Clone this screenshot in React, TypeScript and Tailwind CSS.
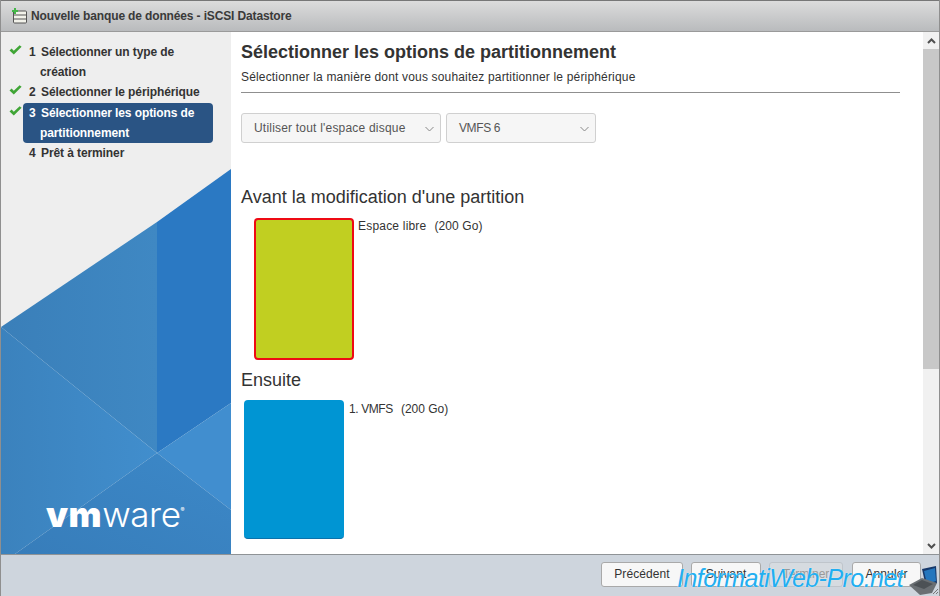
import React from "react";

function Check() {
  return (
    <svg width="13" height="10" viewBox="0 0 13 10" className="shrink-0">
      <path d="M0.5 5.5 L2.6 3.6 L4.8 5.8 L10.6 0.3 L12.6 1.8 L4.8 9.6 Z" fill="#3fa535" />
    </svg>
  );
}

function Step({ n, lines, done, active }: { n: string; lines: string[]; done?: boolean; active?: boolean }) {
  return (
    <div className="flex">
      <div className="w-[22px] pl-[8px] pt-[3px] shrink-0 h-[20px]">{done ? <Check /> : null}</div>
      <div
        className={
          active
            ? "w-[190px] rounded-[4px] bg-[#2a5484] text-white px-[6px] leading-[20px] tracking-[-0.1px]"
            : "w-[190px] text-[#333333] px-[6px] leading-[20px] tracking-[-0.1px]"
        }
      >
        {lines.map((l, i) => (
          <div key={i} className={i === 0 ? "flex" : "pl-[11px]"}>
            {i === 0 ? <span className="w-[12px] shrink-0">{n}</span> : null}
            <span>{l}</span>
          </div>
        ))}
      </div>
    </div>
  );
}

function Select({ label, w, track }: { label: string; w: string; track: string }) {
  return (
    <div className={`${w} h-[30px] rounded-[3px] border border-[#d0d0d0] bg-[#f6f6f6] flex items-center justify-between pl-[12px] pr-[5px] text-[12px] text-[#555555]`}>
      <span className={track}>{label}</span>
      <svg width="9" height="6" viewBox="0 0 9 6" className="mr-[1px] mt-[2px]">
        <path d="M0.5 1 L4.5 5 L8.5 1" fill="none" stroke="#888888" strokeWidth="1" />
      </svg>
    </div>
  );
}

function Footer({ label, disabled, w }: { label: string; disabled?: boolean; w: string }) {
  return (
    <div
      className={
        disabled
          ? `${w} h-[25px] pb-[1px] rounded-[3px] border border-[#bfc5cb] bg-[#d6dbe0] flex items-center justify-center text-[12px] text-[#9a9a9a]`
          : `${w} h-[25px] pb-[1px] rounded-[3px] border border-[#a9a9a9] bg-[#f7f7f7] flex items-center justify-center text-[12px] text-[#333333] tracking-[0.1px]`
      }
    >
      {label}
    </div>
  );
}

export default function App() {
  return (
    <div className="relative w-[940px] h-[596px] overflow-hidden flex flex-col border-l border-r border-[#8f8f8f] bg-white font-['Liberation_Sans',Arial,sans-serif]">
      <header className="h-[32px] shrink-0 flex items-center pl-[10px] gap-[3px] border-t border-b border-t-[#777777] border-b-[#9a9a9a] bg-gradient-to-b from-[#dcdcdc] to-[#b9bbbd]">
        <svg width="17" height="16" viewBox="0 0 17 16">
          <rect x="2.5" y="3" width="13" height="12" rx="1" fill="#f2f2ea" stroke="#555" />
          <path d="M2.5 7 H15.5 M2.5 11 H15.5" stroke="#555" />
          <path d="M3 0 h2 v2 h2 v2 h-2 v2 h-2 v-2 h-2 v-2 h2 Z" fill="#45b649" />
        </svg>
        <span className="text-[12px] [font-weight:600] text-[#3a3a3a] tracking-[-0.14px]">Nouvelle banque de données - iSCSI Datastore</span>
      </header>

      <main className="flex-1 min-h-0 flex">
        <aside className="relative w-[230px] shrink-0 bg-[#eeeeee] pt-[10px] text-[12px] font-bold">
          <svg className="absolute left-0 bottom-0" width="230" height="392" viewBox="1 162 230 392">
            <defs>
              <linearGradient id="mid" x1="0" x2="1" y1="0" y2="0">
                <stop offset="0" stopColor="#3a7fb9" />
                <stop offset="1" stopColor="#3f88c3" />
              </linearGradient>
              <linearGradient id="low" x1="0" x2="1" y1="0" y2="0">
                <stop offset="0" stopColor="#3b82bd" />
                <stop offset="1" stopColor="#418ecd" />
              </linearGradient>
              <linearGradient id="bot" x1="0" x2="1" y1="1" y2="0">
                <stop offset="0" stopColor="#377dba" />
                <stop offset="1" stopColor="#3c88c8" />
              </linearGradient>
            </defs>
            <polygon points="1,327 157,222 157,453" fill="url(#mid)" />
            <polygon points="157,222 231,169 231,403 157,453" fill="#2b79c3" />
            <polygon points="1,327 157,453 15,554 1,554" fill="url(#low)" />
            <polygon points="157,453 231,403 231,510" fill="#418ecf" />
            <polygon points="157,453 231,510 231,554 15,554" fill="url(#bot)" />
          </svg>
          <div className="relative flex flex-col">
            <Step n="1" lines={["Sélectionner un type de", "création"]} done />
            <Step n="2" lines={["Sélectionner le périphérique"]} done />
            <div className="h-[1px]" />
            <Step n="3" lines={["Sélectionner les options de", "partitionnement"]} done active />
            <Step n="4" lines={["Prêt à terminer"]} />
          </div>
          <div className="absolute left-[45px] bottom-[23px] flex items-baseline text-white leading-[34px] text-[35px] font-['Inter',sans-serif] whitespace-nowrap">
            <span className="font-black tracking-[0.5px]">vm</span>
            <span className="font-light tracking-[-0.4px]">ware</span>
            <span className="text-[6px] self-center -mt-[8px]">®</span>
          </div>
        </aside>

        <section className="flex-1 min-w-0 pl-[10px] relative">
          <h1 className="text-[18px] font-bold text-[#333333] leading-[22px] pt-[9px] h-[34px]">Sélectionner les options de partitionnement</h1>
          <div className="w-[659px] h-[27px] border-b border-[#8f8f8f] text-[12px] text-[#333333] leading-[16px] pt-[3px] tracking-[0.17px]">
            Sélectionner la manière dont vous souhaitez partitionner le périphérique
          </div>
          <div className="flex gap-[5px] mt-[20px]">
            <Select label="Utiliser tout l'espace disque" w="w-[200px]" track="tracking-[0.2px]" />
            <Select label="VMFS 6" w="w-[150px]" track="tracking-[-0.4px]" />
          </div>
          <h2 className="text-[18px] text-[#333333] leading-[22px] mt-[43px]">Avant la modification d'une partition</h2>
          <div className="flex mt-[10px] pl-[13px]">
            <div className="w-[100px] h-[142px] rounded-[4px] border-2 border-[#ee0a14] bg-[#c1cf21]" />
            <div className="pl-[4px] text-[12px] text-[#333333] leading-[16px] whitespace-nowrap">
              <span className="tracking-[0.2px]">Espace libre</span>
              <span className="ml-[8px] tracking-[0.1px]">(200 Go)</span>
            </div>
          </div>
          <h2 className="text-[18px] text-[#333333] leading-[22px] mt-[9px]">Ensuite</h2>
          <div className="flex mt-[9px] pl-[3px]">
            <div className="w-[100px] h-[139px] rounded-[4px] border-b border-[#0a72ab] bg-[#0095d3]" />
            <div className="pl-[5px] pt-[1px] text-[12px] text-[#333333] leading-[16px] whitespace-nowrap">
              <span className="tracking-[-0.4px]">1. VMFS</span>
              <span className="ml-[8px]">(200 Go)</span>
            </div>
          </div>
          <div className="absolute right-0 top-0 bottom-0 w-[16px] bg-[#f1f1f1] flex flex-col">
            <div className="h-[17px] flex items-center justify-center">
              <svg width="9" height="6" viewBox="0 0 9 6"><path d="M1 5 L4.5 1.5 L8 5" fill="none" stroke="#505050" strokeWidth="2" /></svg>
            </div>
            <div className="h-[320px] bg-[#c8c8c8]" />
            <div className="flex-1" />
            <div className="h-[17px] flex items-center justify-center">
              <svg width="9" height="6" viewBox="0 0 9 6"><path d="M1 1 L4.5 4.5 L8 1" fill="none" stroke="#505050" strokeWidth="2" /></svg>
            </div>
          </div>
        </section>
      </main>

      <footer className="h-[42px] shrink-0 border-t border-[#8f9396] bg-[#ced5dd] flex justify-end items-start pt-[7px] pr-[18px]">
        <Footer label="Précédent" w="w-[82px]" />
        <div className="w-[8px]" />
        <Footer label="Suivant" w="w-[70px]" />
        <div className="w-[8px]" />
        <Footer label="Terminer" disabled w="w-[74px]" />
        <div className="w-[9px]" />
        <Footer label="Annuler" w="w-[69px]" />
      </footer>

      <svg className="absolute right-[-1px] bottom-0" width="34" height="30" viewBox="906 566 34 30">
        <polygon points="922,569 936,566 937,583 926,587" fill="#16386a" />
        <polygon points="924,571 935,568 936,581 927,584" fill="#2476bd" />
        <polygon points="909,585 922,578 937,583 932,593 920,595" fill="#6a6f73" />
        <polygon points="913,585 922,580 933,584 924,589" fill="#4c5155" />
        <path d="M933 594 L938 589 M936 594 L938 592" stroke="#777" strokeWidth="1" />
      </svg>
      <div className="absolute left-[676px] top-[563px] text-[25px] leading-[30px] italic text-[#22aef0] tracking-[-0.55px] whitespace-nowrap [text-shadow:0_0_1px_#ffffff]">
        InformatiWeb-Pro.net
      </div>
    </div>
  );
}
